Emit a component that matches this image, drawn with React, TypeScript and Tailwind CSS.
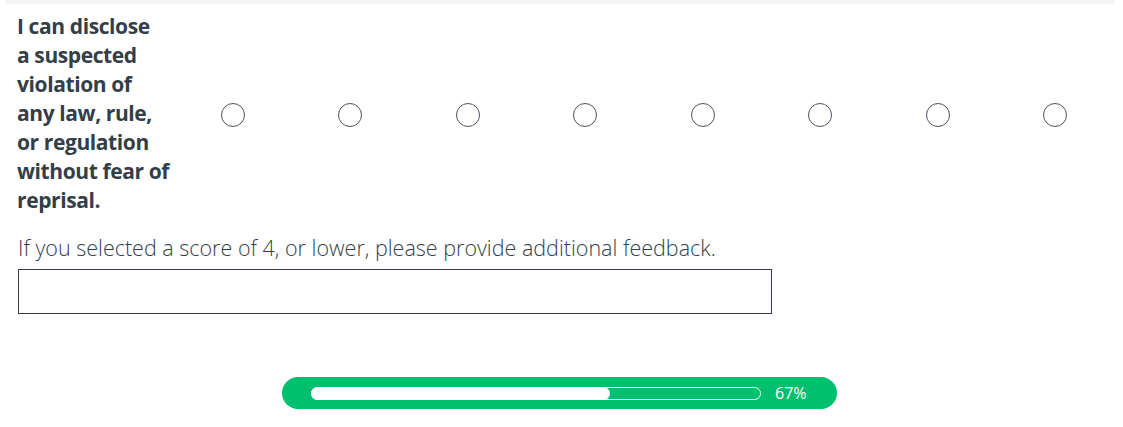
import React from "react";

const lines = [
  "I can disclose",
  "a suspected",
  "violation of",
  "any law, rule,",
  "or regulation",
  "without fear of",
  "reprisal.",
];

export default function App() {
  return (
    <div className="w-[1123px] h-[427px] bg-white relative overflow-hidden" style={{ fontFamily: "'Open Sans', 'Noto Sans', sans-serif" }}>
      <div className="mx-[5px] w-[1110px] h-[4px] bg-[#f4f4f4] rounded-b-[4px]" />
      <div className="flex items-center pl-[17px] pt-[8px]">
        <div className="w-[157px] text-[21px] leading-[29px] font-bold text-[#333e48] tracking-[-0.4px]">
          {lines.map((l) => (
            <div key={l} className="whitespace-nowrap">{l}</div>
          ))}
        </div>
        <div className="grid grid-cols-8 w-[940px] pt-[2px]">
          {Array.from({ length: 8 }).map((_, i) => (
            <div key={i} className="flex justify-center">
              <div className="w-[24px] h-[24px] rounded-full border-[1.5px] border-[#4a535c] bg-white" />
            </div>
          ))}
        </div>
      </div>
      <div className="pl-[18px] pt-[19px]">
        <div className="text-[21.5px] leading-[28px] font-light text-[#333e48] whitespace-nowrap">
          If you selected a score of 4, or lower, please provide additional feedback.
        </div>
        <div className="mt-[7px] w-[754px] h-[45px] border border-[#333e48] bg-white" />
      </div>
      <div className="flex mt-[63px] ml-[282px]">
        <div className="w-[555px] h-[32px] rounded-full bg-[#00bf6f] flex items-center pl-[29px] pr-[30px]">
          <div className="relative w-[450px] h-[13px] rounded-full border border-white">
            <div className="absolute left-[-1px] top-[-1px] h-[13px] w-[299px] rounded-full bg-white" />
          </div>
          <div className="ml-[14px] text-[16px] font-medium text-white">67%</div>
        </div>
      </div>
    </div>
  );
}
